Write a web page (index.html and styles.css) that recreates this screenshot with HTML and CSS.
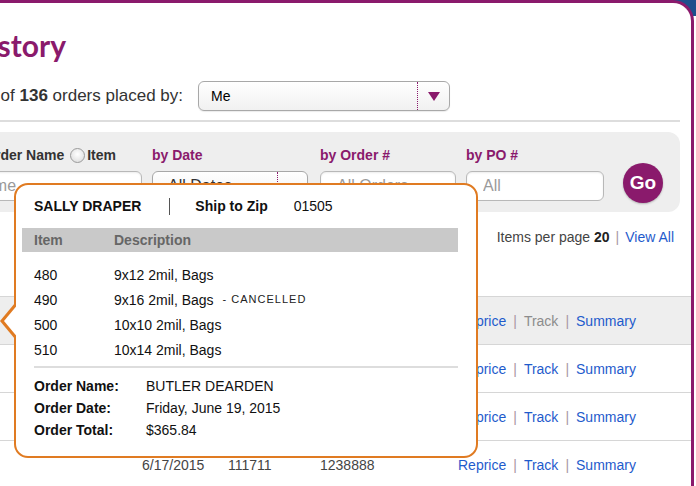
FILE: index.html
```html
<!DOCTYPE html>
<html lang="en">
<head>
	<meta charset="UTF-8">
	<title>Order History</title>
	<link rel="stylesheet" href="styles.css">
</head>
<body>
	<div class="card">
		<div class="title-row">
			<h1>Order History</h1>
		</div>

		<div class="placed-row">
			<div class="placed-text"><span>Showing 1-20 of <b>136</b> orders placed by:</span></div>
			<div class="select select-user">
				<span class="select-value">Me</span>
				<span class="select-btn"><span class="arrow"></span></span>
			</div>
		</div>

		<div class="rule"></div>

		<div class="filters">
			<div class="field field-name">
				<div class="field-label dark">
					<span class="radio checked"></span>Order Name<span class="radio"></span>Item
				</div>
				<input class="input input-name" placeholder="Order Name">
			</div>
			<div class="field field-date">
				<div class="field-label">by Date</div>
				<div class="select select-date">
					<span class="select-value">All Dates</span>
					<span class="select-btn"><span class="arrow"></span></span>
				</div>
			</div>
			<div class="field field-order">
				<div class="field-label">by Order #</div>
				<input class="input" placeholder="All Orders">
			</div>
			<div class="field field-po">
				<div class="field-label">by PO #</div>
				<input class="input" placeholder="All">
			</div>
			<button class="go">Go</button>
		</div>

		<div class="per-page">
			<span>Items per page <b>20</b><span class="sep">|</span><a href="#">View All</a></span>
		</div>

		<div class="orders">
			<div class="order-row active">
				<span></span><span>6/19/2015</span><span>111744</span><span>1238901</span>
				<span class="actions"><a href="#">Reprice</a><span class="sep">|</span><span class="off">Track</span><span class="sep">|</span><a href="#">Summary</a></span>
			</div>
			<div class="order-row">
				<span></span><span>6/18/2015</span><span>111730</span><span>1238895</span>
				<span class="actions"><a href="#">Reprice</a><span class="sep">|</span><a href="#">Track</a><span class="sep">|</span><a href="#">Summary</a></span>
			</div>
			<div class="order-row">
				<span></span><span>6/18/2015</span><span>111722</span><span>1238890</span>
				<span class="actions"><a href="#">Reprice</a><span class="sep">|</span><a href="#">Track</a><span class="sep">|</span><a href="#">Summary</a></span>
			</div>
			<div class="order-row">
				<span></span><span>6/17/2015</span><span>111711</span><span>1238888</span>
				<span class="actions"><a href="#">Reprice</a><span class="sep">|</span><a href="#">Track</a><span class="sep">|</span><a href="#">Summary</a></span>
			</div>
		</div>
	</div>

	<div class="popup">
		<div class="popup-head">
			<b>SALLY DRAPER</b><span class="divider"></span><b>Ship to Zip</b><span class="zip">01505</span>
		</div>
		<div class="popup-bar">
			<span class="col-item">Item</span><span>Description</span>
		</div>
		<div class="popup-items">
			<div class="line"><span class="col-item">480</span><span>9x12 2mil, Bags</span></div>
			<div class="line"><span class="col-item">490</span><span>9x16 2mil, Bags</span><span class="cancelled">- CANCELLED</span></div>
			<div class="line"><span class="col-item">500</span><span>10x10 2mil, Bags</span></div>
			<div class="line"><span class="col-item">510</span><span>10x14 2mil, Bags</span></div>
		</div>
		<div class="popup-rule"></div>
		<div class="popup-info">
			<div class="line"><b class="col-label">Order Name:</b><span>BUTLER DEARDEN</span></div>
			<div class="line"><b class="col-label">Order Date:</b><span>Friday, June 19, 2015</span></div>
			<div class="line"><b class="col-label">Order Total:</b><span>$365.84</span></div>
		</div>
	</div>
</body>
</html>
```

FILE: styles.css
```css
html {
	background: linear-gradient(#1c4f8c, #1c4f8c) right top / 24px 16px no-repeat #fff;
}
body {
	margin: 0;
	position: relative;
	height: 486px;
	overflow: hidden;
	font-family: "Liberation Sans", Arial, sans-serif;
	font-size: 14px;
	color: #333;
}
a {
	color: #1f5bcc;
	text-decoration: none;
}

.card {
	width: 691px;
	height: 540px;
	background: #fff;
	border-top: 3px solid #8a1a6c;
	border-right: 3px solid #8a1a6c;
	border-top-right-radius: 21px;
}

/* ----- title + placed by ----- */
.title-row {
	display: flex;
	justify-content: flex-end;
	width: 66px;
	height: 34px;
	margin-top: 25px;
}
.title-row h1 {
	margin: 0;
	font: 700 30px/34px Lato, "Liberation Sans", sans-serif;
	color: #8a1a6c;
	white-space: nowrap;
}
.placed-row {
	display: flex;
	align-items: center;
	height: 30px;
	margin-top: 19px;
}
.placed-text {
	display: flex;
	justify-content: flex-end;
	width: 183px;
	margin-right: 15px;
	font-size: 17px;
	white-space: nowrap;
	color: #333;
}

.select {
	display: flex;
	box-sizing: border-box;
	height: 30px;
	border: 1px solid #a8a8a8;
	border-radius: 6px;
	background: linear-gradient(#fff, #f1f1f1);
	box-shadow: 0 1px 1px rgba(0,0,0,0.08);
}
.select-value {
	flex: 1;
	line-height: 28px;
	padding-left: 12px;
	white-space: nowrap;
	overflow: hidden;
}
.select-btn {
	display: flex;
	align-items: center;
	justify-content: center;
	width: 31px;
	border-left: 1px dotted #8a1a6c;
}
.arrow {
	width: 0;
	height: 0;
	border-left: 6px solid transparent;
	border-right: 6px solid transparent;
	border-top: 9px solid #8a1a6c;
	margin-top: 1px;
}
.select-user {
	width: 252px;
	color: #000;
}

.rule {
	height: 2px;
	margin: 9px 11px 0 0;
	background: #ddd;
}

/* ----- filter panel ----- */
.filters {
	display: flex;
	align-items: flex-start;
	box-sizing: border-box;
	height: 80px;
	margin: 10px 11px 0 0;
	padding-top: 15px;
	background: #eee;
	border-radius: 0 12px 12px 0;
}
.field {
	display: flex;
	flex-direction: column;
	flex-shrink: 0;
}
.field-label {
	display: flex;
	align-items: center;
	height: 16px;
	margin-bottom: 8px;
	font-weight: bold;
	color: #8a1a6c;
	white-space: nowrap;
}
.field-label.dark {
	color: #333;
	margin-right: 26px;
}
.radio {
	box-sizing: border-box;
	width: 15px;
	height: 15px;
	margin: 0 2px 0 6px;
	border: 1px solid #9a9a9a;
	border-radius: 50%;
	background: radial-gradient(circle at 50% 40%, #fff, #d8d8d8);
}
.input {
	box-sizing: border-box;
	height: 30px;
	padding: 0 0 0 16px;
	border: 1px solid #b8b8b8;
	border-radius: 6px;
	background: #fff;
	box-shadow: inset 0 1px 2px rgba(0,0,0,0.08);
	font: 16px "Liberation Sans", Arial, sans-serif;
}
.input::placeholder {
	color: #9a9a9a;
}
.field-name {
	width: 142px;
	margin-right: 10px;
	align-items: flex-end;
}
.input-name {
	width: 227px;
	padding-left: 12px;
}
.field-date {
	width: 156px;
	margin-right: 12px;
}
.select-date {
	font-size: 16px;
}
.select-date .select-value {
	padding-left: 15px;
}
.select-date .select-btn {
	width: 29px;
}
.select-date .arrow {
	margin-top: 12px;
}
.field-order {
	width: 136px;
	margin-right: 10px;
}
.field-po {
	width: 138px;
	margin-right: 19px;
}
.go {
	width: 40px;
	height: 40px;
	margin-top: 16px;
	padding: 0;
	border: 0;
	border-radius: 50%;
	background: #8a1a6c;
	box-shadow: 0 1px 2px rgba(0,0,0,0.25);
	color: #fff;
	font: bold 19px "Liberation Sans", Arial, sans-serif;
}

.per-page {
	display: flex;
	justify-content: flex-end;
	height: 18px;
	line-height: 18px;
	margin: 16px 17px 0 0;
	color: #444;
	white-space: nowrap;
}
.per-page b {
	color: #222;
}
.sep {
	margin: 0 6px;
	color: #a996a4;
}

/* ----- order rows ----- */
.orders {
	margin-top: 50px;
}
.order-row {
	display: grid;
	grid-template-columns: 142px 86px 92px 138px 1fr;
	align-items: center;
	height: 47px;
	border-top: 1px solid #d6d6d6;
	color: #444;
}
.order-row.active {
	background: #eee;
}
.actions .sep {
	margin: 0 7px;
}
.off {
	color: #8c8c8c;
}

/* ----- popup ----- */
.popup {
	position: absolute;
	left: 14px;
	top: 183px;
	box-sizing: border-box;
	width: 464px;
	height: 275px;
	border: 2px solid #e07b22;
	border-radius: 14px;
	background: #fff;
	color: #111;
}
.popup::before,
.popup::after {
	content: "";
	position: absolute;
	top: 118px;
	width: 0;
	height: 0;
	border-top: 18px solid transparent;
	border-bottom: 18px solid transparent;
}
.popup::before {
	left: -16px;
	border-right: 15px solid #e07b22;
}
.popup::after {
	left: -12px;
	border-right: 15px solid #fff;
}
.popup-head {
	display: flex;
	align-items: center;
	height: 20px;
	padding: 11px 0 0 18px;
}
.divider {
	width: 1px;
	height: 17px;
	margin: 0 25px 0 28px;
	background: #555;
}
.zip {
	margin-left: 26px;
}
.popup-bar {
	display: flex;
	align-items: center;
	height: 24px;
	margin: 12px 18px 0 6px;
	padding-left: 12px;
	background: #c9c9c9;
	color: #666;
	font-weight: bold;
}
.col-item {
	width: 80px;
}
.popup-items {
	margin-top: 10px;
}
.line {
	display: flex;
	align-items: center;
	padding-left: 18px;
	white-space: nowrap;
}
.popup-items .line {
	height: 25px;
}
.cancelled {
	margin: -2px 0 0 9px;
	font-size: 11px;
	letter-spacing: 1px;
	color: #222;
}
.popup-rule {
	height: 2px;
	margin: 4px 18px 0 18px;
	background: #ddd;
}
.popup-info {
	margin-top: 7px;
}
.popup-info .line {
	height: 22px;
}
.col-label {
	width: 112px;
}
```
